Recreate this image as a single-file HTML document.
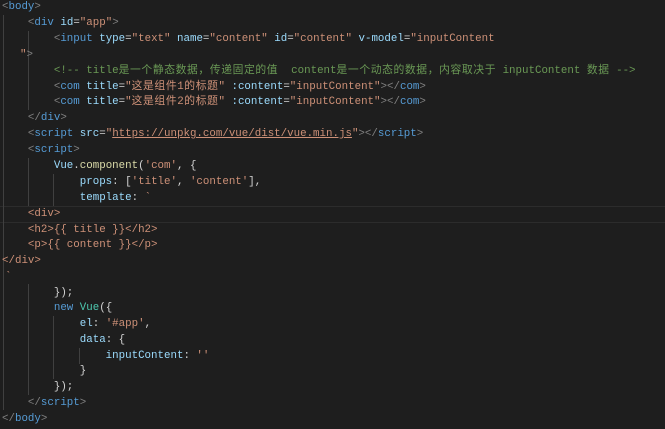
<!DOCTYPE html>
<html><head><meta charset="utf-8"><style>
html,body{margin:0;padding:0;background:#1e1e1e;width:665px;height:429px;overflow:hidden;position:relative}
.l{position:absolute;left:2px;height:16px;line-height:16px;white-space:pre;font-family:"Liberation Mono","Noto Sans CJK SC",monospace;font-size:10.8px;color:#d4d4d4}
.g{position:absolute;width:1px;background:#404040}
.p{color:#808080}.t{color:#569cd6}.a{color:#9cdcfe}.s{color:#ce9178}.c{color:#6a9955}.y{color:#dcdcaa}.k{color:#4ec9b0}
.z{letter-spacing:0.6px}
.hl{position:absolute;left:0;width:665px;top:206px;height:15px;border-top:1px solid #2c2c2c;border-bottom:1px solid #2c2c2c}
</style></head><body>
<div class="hl"></div>
<div class="g" style="left:3px;top:15px;height:395px"></div>
<div class="g" style="left:28px;top:31px;height:79px"></div>
<div class="g" style="left:28px;top:158px;height:48px"></div>
<div class="g" style="left:53px;top:174px;height:32px"></div>
<div class="g" style="left:28px;top:284px;height:111px"></div>
<div class="g" style="left:53px;top:316px;height:63px"></div>
<div class="g" style="left:79px;top:348px;height:16px"></div>
<div class="l" style="top:-1px"><span class="p">&lt;</span><span class="t">body</span><span class="p">&gt;</span></div>
<div class="l" style="top:15px">    <span class="p">&lt;</span><span class="t">div</span> <span class="a">id</span>=<span class="s">"app"</span><span class="p">&gt;</span></div>
<div class="l" style="top:31px">        <span class="p">&lt;</span><span class="t">input</span> <span class="a">type</span>=<span class="s">"text"</span> <span class="a">name</span>=<span class="s">"content"</span> <span class="a">id</span>=<span class="s">"content"</span> <span class="a">v-model</span>=<span class="s">"inputContent</span></div>
<div class="l" style="top:47px;left:20px"><span class="s">"</span><span class="p">&gt;</span></div>
<div class="l" style="top:63px">        <span class="c">&lt;!-- title<span class="z">是一个静态数据，传递固定的值</span>  content<span class="z">是一个动态的数据，内容取决于</span> inputContent <span class="z">数据</span> --&gt;</span></div>
<div class="l" style="top:79px">        <span class="p">&lt;</span><span class="t">com</span> <span class="a">title</span>=<span class="s">"<span class="z">这是组件1的标题</span>"</span> <span class="a">:content</span>=<span class="s">"inputContent"</span><span class="p">&gt;&lt;/</span><span class="t">com</span><span class="p">&gt;</span></div>
<div class="l" style="top:94px">        <span class="p">&lt;</span><span class="t">com</span> <span class="a">title</span>=<span class="s">"<span class="z">这是组件2的标题</span>"</span> <span class="a">:content</span>=<span class="s">"inputContent"</span><span class="p">&gt;&lt;/</span><span class="t">com</span><span class="p">&gt;</span></div>
<div class="l" style="top:110px">    <span class="p">&lt;/</span><span class="t">div</span><span class="p">&gt;</span></div>
<div class="l" style="top:126px">    <span class="p">&lt;</span><span class="t">script</span> <span class="a">src</span>=<span class="s">"<u>https://unpkg.com/vue/dist/vue.min.js</u>"</span><span class="p">&gt;&lt;/</span><span class="t">script</span><span class="p">&gt;</span></div>
<div class="l" style="top:142px">    <span class="p">&lt;</span><span class="t">script</span><span class="p">&gt;</span></div>
<div class="l" style="top:158px">        <span class="a">Vue</span>.<span class="y">component</span>(<span class="s">'com'</span>, {</div>
<div class="l" style="top:174px">            <span class="a">props</span>: [<span class="s">'title'</span>, <span class="s">'content'</span>],</div>
<div class="l" style="top:190px">            <span class="a">template</span>: <span class="s">`</span></div>
<div class="l" style="top:206px"><span class="s">    &lt;div&gt;</span></div>
<div class="l" style="top:222px"><span class="s">    &lt;h2&gt;{{ title }}&lt;/h2&gt;</span></div>
<div class="l" style="top:237px"><span class="s">    &lt;p&gt;{{ content }}&lt;/p&gt;</span></div>
<div class="l" style="top:253px"><span class="s">&lt;/div&gt;</span></div>
<div class="l" style="top:269px;left:5px"><span class="s">`</span></div>
<div class="l" style="top:285px">        });</div>
<div class="l" style="top:300px">        <span class="t">new</span> <span class="k">Vue</span>({</div>
<div class="l" style="top:316px">            <span class="a">el</span>: <span class="s">'#app'</span>,</div>
<div class="l" style="top:332px">            <span class="a">data</span>: {</div>
<div class="l" style="top:348px">                <span class="a">inputContent</span>: <span class="s">''</span></div>
<div class="l" style="top:363px">            }</div>
<div class="l" style="top:379px">        });</div>
<div class="l" style="top:395px">    <span class="p">&lt;/</span><span class="t">script</span><span class="p">&gt;</span></div>
<div class="l" style="top:411px"><span class="p">&lt;/</span><span class="t">body</span><span class="p">&gt;</span></div>
</body></html>
